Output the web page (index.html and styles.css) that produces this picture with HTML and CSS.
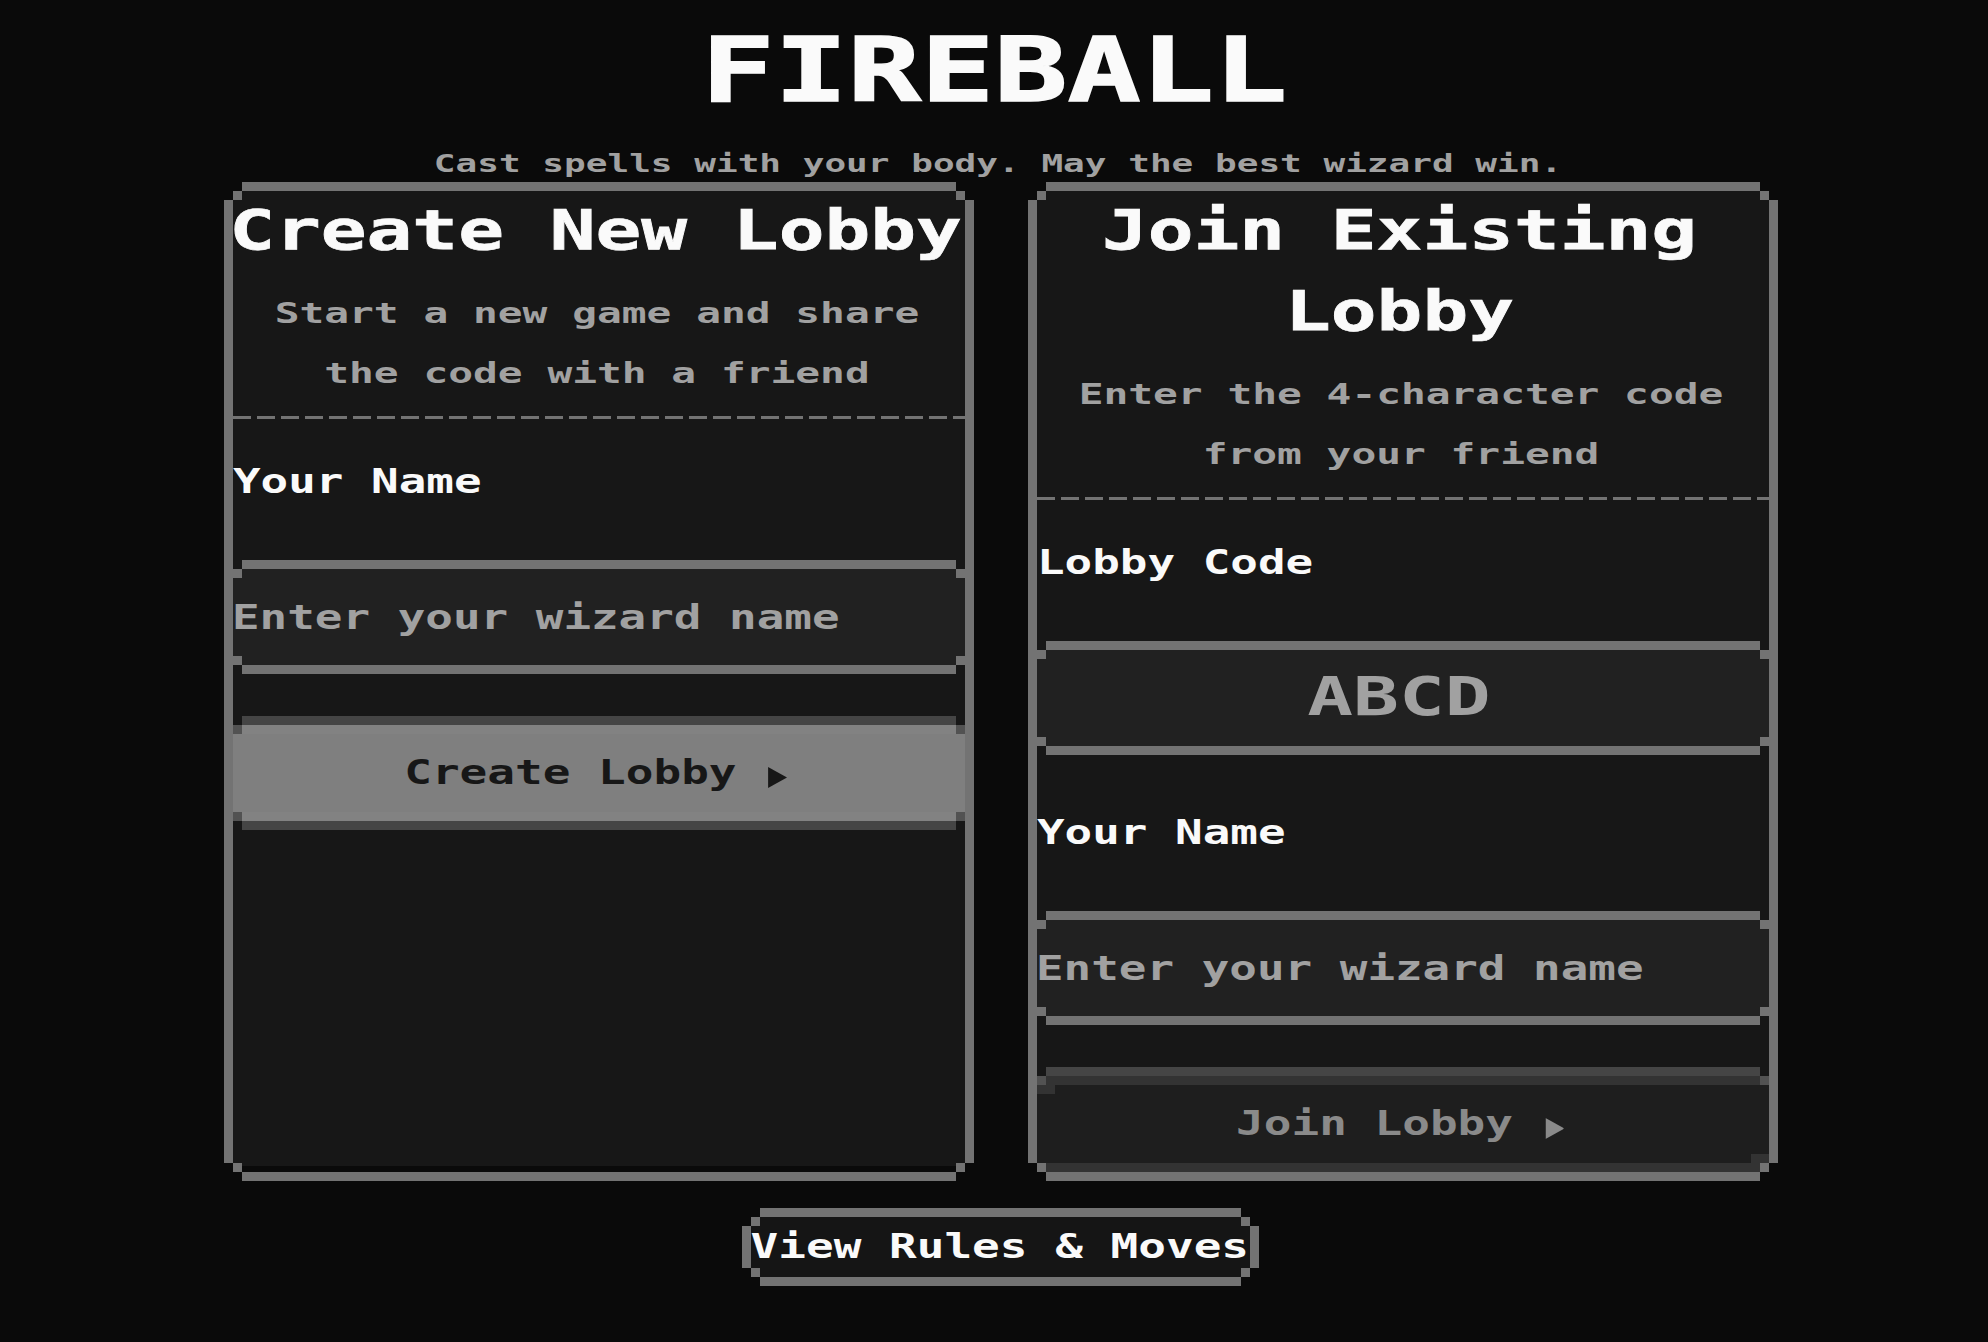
FILE: index.html
```html
<!DOCTYPE html>
<html lang="en">
<head>
    <meta charset="UTF-8">
    <meta name="viewport" content="width=device-width, initial-scale=1.0">
    <title>Fireball</title>
    <link rel="stylesheet" href="styles.css">
</head>
<body>
    <main class="container">
        <h1 class="title">FIREBALL</h1>
        <p class="tagline">Cast spells with your body. May the best wizard win.</p>

        <div class="lobbies">
            <section class="card card-create">
                <h2>Create New Lobby</h2>
                <p class="description">Start a new game and share<br>the code with a friend</p>
                <div class="divider"></div>
                <form onsubmit="return false">
                    <label for="create-name">Your Name</label>
                    <div class="field"><input type="text" id="create-name" placeholder="Enter your wizard name"></div>
                    <button class="button button-create" disabled>
                        <span>Create Lobby <svg class="arrow" viewBox="0 0 19 21" preserveAspectRatio="none"><path d="M0 0L19 10.5L0 21Z"/></svg></span>
                    </button>
                </form>
            </section>

            <section class="card card-join">
                <h2>Join Existing<br>Lobby</h2>
                <p class="description">Enter the 4-character code<br>from your friend</p>
                <div class="divider"></div>
                <form onsubmit="return false">
                    <label for="lobby-code">Lobby Code</label>
                    <div class="field"><input type="text" id="lobby-code" class="code" maxlength="4" placeholder="ABCD"></div>
                    <label for="join-name">Your Name</label>
                    <div class="field"><input type="text" id="join-name" placeholder="Enter your wizard name"></div>
                    <button class="button button-join" disabled>
                        <span>Join Lobby <svg class="arrow" viewBox="0 0 19 21" preserveAspectRatio="none"><path d="M0 0L19 10.5L0 21Z"/></svg></span>
                    </button>
                </form>
            </section>
        </div>

        <button class="rules"><span>View Rules &amp; Moves</span></button>
    </main>
</body>
</html>
```
FILE: styles.css
```css
* {
    box-sizing: border-box;
}
body {
    --px: 9px;
    --line: #737373;
    margin: 0;
    min-height: 100vh;
    background-color: #0a0a0a;
    color: #fafafa;
    font-family: 'DejaVu Sans Mono', monospace;
    font-weight: bold;
    overflow: hidden;
}
h1, h2, p {
    margin: 0;
    font-weight: bold;
    text-align: center;
    white-space: nowrap;
}
.container {
    width: 1550px;
    margin: 0 auto;
    padding: 20px 0 0 14px;
    display: flex;
    flex-direction: column;
    align-items: center;
}
/* all text is stretched sideways for the wide arcade look */
.title {
    font-size: 89px;
    line-height: 100px;
    -webkit-text-stroke: 1.5px #fafafa;
    transform: translateX(-7px) scaleX(1.367);
}
.tagline {
    margin-top: 25px;
    font-size: 24.5px;
    line-height: 37px;
    color: #a1a1a1;
    transform: translateX(-2.5px) scaleX(1.471);
}
.lobbies {
    width: 100%;
    margin-top: 9px;
    display: grid;
    grid-template-columns: 1fr 1fr;
    gap: 72px;
}
.card {
    position: relative;
    height: 981px;
    background: linear-gradient(#171717, #171717) top / 100% calc(100% - 6px) no-repeat;
}
/* pixel frame: four bars and four corner steps */
.card::before,
.field::before,
.button::before,
.rules::before {
    content: '';
    position: absolute;
    inset: calc(var(--px) * -1);
    z-index: 1;
    pointer-events: none;
    --ink: linear-gradient(var(--line), var(--line));
    --long: calc(100% - 4 * var(--px));
    background:
        var(--ink) center top / var(--long) var(--px),
        var(--ink) center bottom / var(--long) var(--px),
        var(--ink) left center / var(--px) var(--long),
        var(--ink) right center / var(--px) var(--long),
        var(--ink) left var(--px) top var(--px) / var(--px) var(--px),
        var(--ink) right var(--px) top var(--px) / var(--px) var(--px),
        var(--ink) left var(--px) bottom var(--px) / var(--px) var(--px),
        var(--ink) right var(--px) bottom var(--px) / var(--px) var(--px);
    background-repeat: no-repeat;
}
.card::before {
    z-index: 3;
}
.card h2 {
    padding-bottom: 11px;
    font-size: 56px;
    line-height: 81px;
    -webkit-text-stroke: 0.7px #fafafa;
    transform: translate(-3.5px, -2px) scaleX(1.358);
}
.description {
    font-size: 29px;
    line-height: 60px;
    color: #a1a1a1;
    transform: translateX(-2px) scaleX(1.42);
}
.divider {
    height: 3px;
    margin-top: 13px;
    background: repeating-linear-gradient(90deg, var(--line) 0 18px, transparent 18px 24px);
}
form {
    display: flex;
    flex-direction: column;
    padding-top: 33px;
}
label {
    margin-bottom: 57px;
    font-size: 33px;
    line-height: 60px;
    transform: scaleX(1.39);
    transform-origin: left;
}
.field {
    position: relative;
    height: 96px;
    background-color: #212121;
}
.field + label {
    margin-top: 57px;
}
input {
    width: calc(100% / 1.39);
    height: 96px;
    padding: 0;
    border: none;
    outline: none;
    background: transparent;
    color: #fafafa;
    font: bold 33px 'DejaVu Sans Mono', monospace;
    transform: translateX(-1px) scaleX(1.39);
    transform-origin: left;
}
input::placeholder {
    color: #a1a1a1;
    opacity: 1;
}
input.code {
    width: calc(100% / 1.424);
    padding-bottom: 3px;
    font-size: 53.5px;
    text-align: center;
    transform: translateX(-4px) scaleX(1.424);
}
.button,
.rules {
    position: relative;
    border: none;
    padding: 0 0 2px;
    font: bold 33px 'DejaVu Sans Mono', monospace;
    white-space: nowrap;
}
.button {
    --line: #454545;
    height: 96px;
    margin-top: 60px;
    color: #171717;
}
.button span,
.rules span {
    display: inline-block;
    transform: translateX(-1px) scaleX(1.394);
}
.arrow {
    width: 13.6px;
    height: 21px;
    margin: 0 3.2px 0 3px;
    vertical-align: -4px;
    fill: currentColor;
}
.button-create {
    background: linear-gradient(#828282 9px, #7f7f7f 9px 87px, #828282 87px);
}
.button-join {
    color: #8a8a8a;
    background:
        linear-gradient(#333, #333) 0 0 / 100% 9px no-repeat,
        linear-gradient(#333, #333) 0 100% / 100% 9px no-repeat,
        linear-gradient(#333, #333) 0 9px / 18px 9px no-repeat,
        linear-gradient(#333, #333) 100% 78px / 18px 9px no-repeat,
        #1e1e1e;
}
.button::before {
    --step: linear-gradient(#525252, #525252);
    background:
        var(--ink) center top / var(--long) var(--px),
        var(--ink) center bottom / var(--long) var(--px),
        var(--step) left var(--px) top var(--px) / var(--px) var(--px),
        var(--step) right var(--px) top var(--px) / var(--px) var(--px),
        var(--step) left var(--px) bottom var(--px) / var(--px) var(--px),
        var(--step) right var(--px) bottom var(--px) / var(--px) var(--px);
    background-repeat: no-repeat;
}
.rules {
    width: 499px;
    height: 60px;
    margin: 45px 1px 0 0;
    background-color: #151515;
    color: #fafafa;
    display: flex;
    justify-content: center;
    align-items: center;
}
```
